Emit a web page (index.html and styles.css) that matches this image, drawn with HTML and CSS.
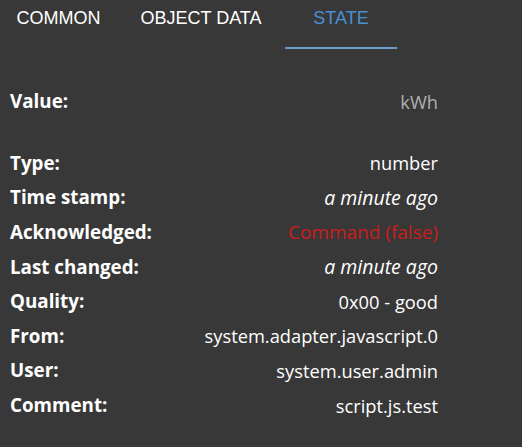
FILE: index.html
```html
<!DOCTYPE html>
<html lang="en">
<head>
  <meta charset="UTF-8" />
  <title>State</title>
  <link rel="stylesheet" href="styles.css">
</head>
<body>
  <nav class="tabs">
    <div class="tab tab-common">COMMON</div>
    <div class="tab tab-object">OBJECT DATA</div>
    <div class="tab tab-state active">STATE</div>
  </nav>

  <table class="state-table">
    <tbody>
      <tr><td class="label">Value:</td><td class="value muted">kWh</td></tr>
      <tr class="spacer"><td></td><td></td></tr>
      <tr><td class="label">Type:</td><td class="value">number</td></tr>
      <tr><td class="label">Time stamp:</td><td class="value italic">a minute ago</td></tr>
      <tr><td class="label">Acknowledged:</td><td class="value red">Command (false)</td></tr>
      <tr><td class="label">Last changed:</td><td class="value italic">a minute ago</td></tr>
      <tr><td class="label">Quality:</td><td class="value">0x00 - good</td></tr>
      <tr><td class="label">From:</td><td class="value">system.adapter.javascript.0</td></tr>
      <tr><td class="label">User:</td><td class="value">system.user.admin</td></tr>
      <tr><td class="label">Comment:</td><td class="value">script.js.test</td></tr>
    </tbody>
  </table>
</body>
</html>
```

FILE: styles.css
```css
* { box-sizing: border-box; }
body {
  margin: 0; background: #383838; color: #fff;
  font-family: 'Open Sans', sans-serif;
}
.tabs {
  display: flex; height: 49px;
}
.tab {
  font-family: 'Liberation Sans', Arial, sans-serif;
  font-size: 18px; color: #fff;
  text-align: center; padding-top: 8px;
  border-bottom: 2px solid transparent;
}
.tab-common { width: 117px; }
.tab-object { width: 168px; }
.tab-state { width: 112px; }
.tab.active { color: #4a90d0; border-bottom-color: #6b9bc9; }

.state-table {
  width: 438px; border-collapse: collapse; margin-top: 35px;
}
.state-table td {
  height: 34.6px; padding: 0; font-size: 18.3px; vertical-align: middle;
}
.state-table .label { padding-left: 10px; font-weight: bold; font-size: 18.8px; }
.state-table .value { text-align: right; }
.state-table .italic { font-style: italic; font-size: 19.5px; }
.state-table .red { color: #cc1c1c; font-size: 19px; }
.spacer td { height: 27px; }
.muted { color: #b0b0b0; }
```
